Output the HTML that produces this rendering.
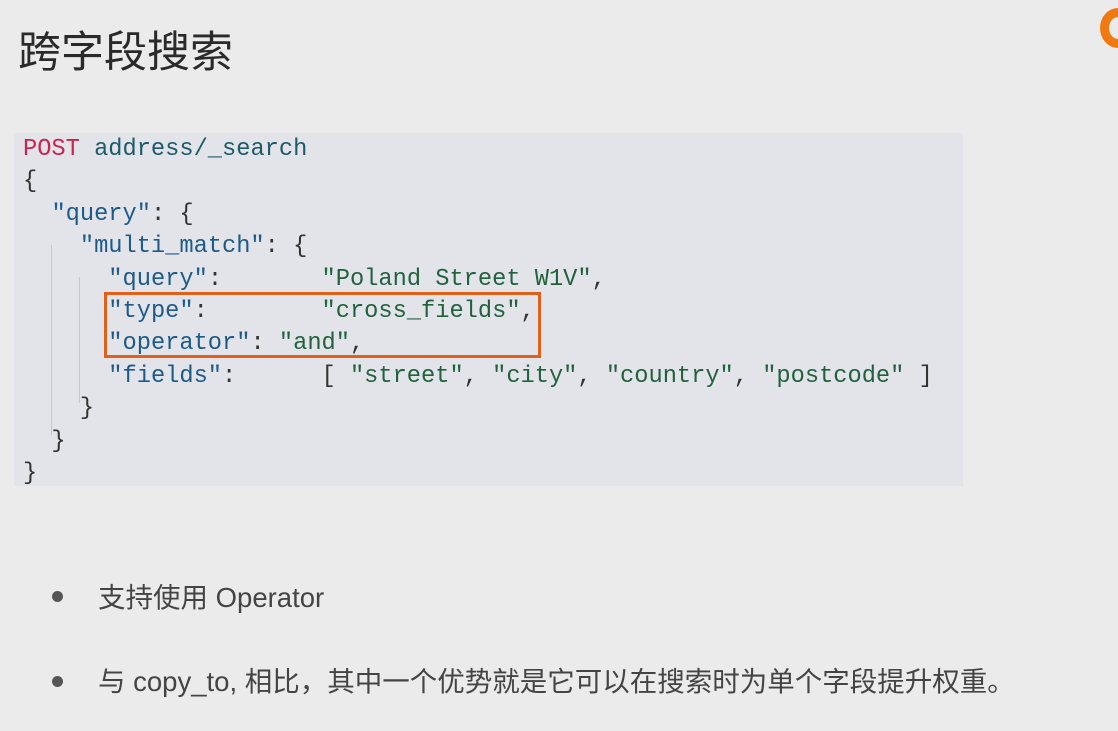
<!DOCTYPE html>
<html><head><meta charset="utf-8"><style>
body{margin:0;width:1118px;height:731px;background:#ebebeb;position:relative;overflow:hidden;font-family:"Liberation Sans","Noto Sans CJK SC",sans-serif}
.t{position:absolute;left:18px;top:18px;font-size:43px;color:#2a2a2a}
.code{position:absolute;left:14px;top:133px;width:949px;height:353px;background:#e3e4e9}
pre{position:absolute;left:9px;top:1px;margin:0;font-family:"Liberation Mono",monospace;font-size:23.7px;line-height:32.4px;color:#333}
.k{color:#1d5a8a}.s{color:#21623d}.m{color:#c8244f}.p{color:#1d5a6a}
.box{position:absolute;left:104px;top:292px;width:431px;height:60px;border:3px solid #e0601a}
.g{position:absolute;width:1px;background:#c8c8c8}
.b{position:absolute;left:98px;font-size:27.5px;color:#444}
.d{position:absolute;left:52px;width:11px;height:11px;border-radius:50%;background:#555}
.logo{position:absolute;left:1100px;top:8px;width:36px;height:40px;border-radius:50%;border:9px solid #f07a10;box-sizing:border-box}
</style></head><body>
<div class="t">跨字段搜索</div>
<div class="logo"></div>
<div class="code">
<div class="g" style="left:37px;top:112px;height:190px"></div>
<div class="g" style="left:65px;top:144px;height:126px"></div>
<pre><span class="m">POST</span> <span class="p">address/_search</span>
{
  <span class="k">"query"</span>: {
    <span class="k">"multi_match"</span>: {
      <span class="k">"query"</span>:       <span class="s">"Poland Street W1V"</span>,
      <span class="k">"type"</span>:        <span class="s">"cross_fields"</span>,
      <span class="k">"operator"</span>: <span class="s">"and"</span>,
      <span class="k">"fields"</span>:      [ <span class="s">"street"</span>, <span class="s">"city"</span>, <span class="s">"country"</span>, <span class="s">"postcode"</span> ]
    }
  }
}</pre>
</div>
<div class="box"></div>
<div class="d" style="top:591px"></div>
<div class="b" style="top:575px">支持使用 Operator</div>
<div class="d" style="top:676px"></div>
<div class="b" style="top:659px">与 copy_to, 相比，其中一个优势就是它可以在搜索时为单个字段提升权重。</div>
</body></html>
